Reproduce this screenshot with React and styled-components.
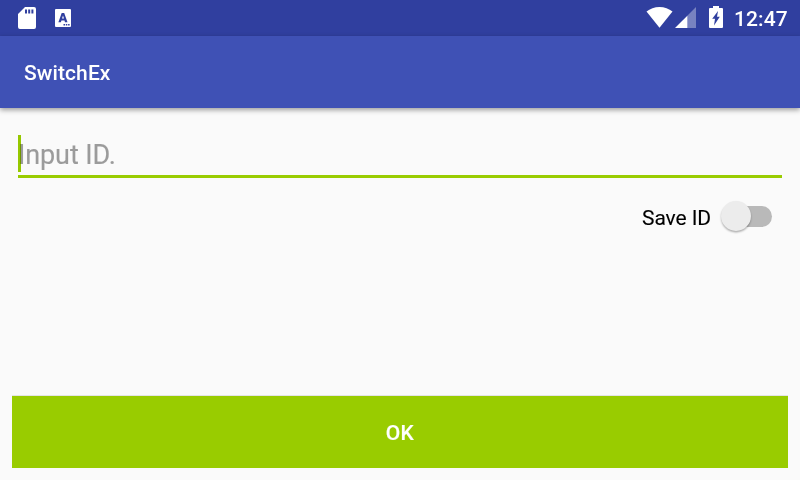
import React from "react";
import styled, { createGlobalStyle } from "styled-components";

const GlobalStyle = createGlobalStyle`
  * { box-sizing: border-box; }
  body { margin: 0; background: #fafafa; font-family: Roboto, sans-serif; }
`;

const Screen = styled.div`
  width: 800px;
  height: 480px;
  display: flex;
  flex-direction: column;
  overflow: hidden;
  background: #fafafa;
`;

const StatusBar = styled.header`
  height: 36px;
  flex: none;
  display: flex;
  align-items: flex-start;
  padding: 0 12px 0 18px;
  background: #303f9f;
  color: #fff;
`;

const StatusIcon = styled.svg`
  display: block;
  flex: none;
  width: ${(p) => p.$w}px;
  height: ${(p) => p.$h}px;
  margin-top: ${(p) => p.$top}px;
  margin-left: ${(p) => p.$gap || 0}px;
`;

const Spacer = styled.div`
  flex: 1;
`;

const Clock = styled.span`
  width: 54px;
  margin-left: 11px;
  font-size: 21px;
  font-weight: 500;
  line-height: 39px;
  letter-spacing: 0.1px;
  white-space: nowrap;
`;

const AppBar = styled.div`
  height: 72px;
  flex: none;
  display: flex;
  align-items: center;
  padding: 1px 24px 0;
  background: #3f51b5;
  box-shadow: 0 2px 5px rgba(0, 0, 0, 0.38);
`;

const Title = styled.h1`
  margin: 0;
  color: #fff;
  font-size: 21px;
  font-weight: 500;
  line-height: 28px;
  letter-spacing: 0.1px;
`;

const Content = styled.main`
  flex: 1;
  display: flex;
  flex-direction: column;
  padding: 27px 12px 12px;
`;

const Field = styled.div`
  height: 43px;
  margin: 0 6px;
  border-bottom: 3px solid #99cc00;
`;

const Hint = styled.div`
  height: 37px;
  color: #9b9b9b;
  font-size: 27px;
  line-height: 40px;
  letter-spacing: -0.1px;
  -webkit-text-stroke: 0.15px #9b9b9b;
  position: relative;
`;

const Caret = styled.span`
  position: absolute;
  left: 0;
  top: 0;
  width: 3px;
  height: 37px;
  background: #99cc00;
  mix-blend-mode: multiply;
`;

const SwitchRow = styled.label`
  display: flex;
  justify-content: flex-end;
  align-items: center;
  height: 31px;
  margin: 23px 16px 0 0;
`;

const SwitchLabel = styled.span`
  margin-right: 11px;
  padding-top: 3px;
  color: #000;
  font-size: 21px;
  line-height: 30px;
  letter-spacing: -0.1px;
  -webkit-text-stroke: 0.1px #000;
`;

const Track = styled.span`
  width: 42px;
  height: 21px;
  margin-left: 8px;
  border-radius: 11px;
  background: #b9b9b9;
  position: relative;
`;

const Thumb = styled.span`
  position: absolute;
  left: -9px;
  top: -5px;
  width: 30px;
  height: 30px;
  border-radius: 50%;
  background: #ececec;
  box-shadow: 0 1.5px 2px rgba(0, 0, 0, 0.3);
`;

const OkButton = styled.button`
  height: 72px;
  margin-top: auto;
  padding: 2px 0 0;
  border: 0;
  background: #99cc00;
  box-shadow: 0 -1px 0 #e4e4e4;
  color: #fff;
  font: 500 21px Roboto, sans-serif;
  letter-spacing: 0.3px;
  -webkit-text-stroke: 0.15px #fff;
`;

export default function App() {
  return (
    <Screen>
      <GlobalStyle />
      <StatusBar>
        <StatusIcon $w={18} $h={22} $top={7} viewBox="0 0 18 22" fill="#fff">
          <path fillRule="evenodd" d="M7 0h9a2 2 0 0 1 2 2v18a2 2 0 0 1-2 2H2a2 2 0 0 1-2-2V7zM7 2.5v4h2v-4zm3.2 0v4h2v-4zm3.2 0v4h2v-4z" />
        </StatusIcon>
        <StatusIcon $w={16} $h={18} $top={9} $gap={19} viewBox="0 0 16 18" fill="#fff">
          <path fillRule="evenodd" d="M1 0h14a1 1 0 0 1 1 1v16a1 1 0 0 1-1 1H1a1 1 0 0 1-1-1V1a1 1 0 0 1 1-1zM6.700 4 3.400 13.200h2.500l.5-1.700h3.100l.5 1.700h2.500L9.200 4zM8 6.400l1 3.200H7zM8.500 15v1.500H10V15zm2.300 0v1.500h1.500V15zm2.300 0v1.500h1.500V15z" />
        </StatusIcon>
        <Spacer />
        <StatusIcon $w={27} $h={21} $top={7} viewBox="0 0 27 21" fill="#fff">
          <path d="M13.5 20.8.5 4.6C4 1.7 8.5 0 13.5 0s9.5 1.7 13 4.6z" />
        </StatusIcon>
        <StatusIcon $w={21} $h={21} $top={7} $gap={2} viewBox="0 0 21 21" fill="#fff">
          <path opacity=".35" d="M21 0v21H12V9z" />
          <path d="M0 21 12.3 8.7V21z" />
        </StatusIcon>
        <StatusIcon $w={14} $h={22} $top={6} $gap={13} viewBox="0 0 14 22" fill="#fff">
          <path fillRule="evenodd" d="M4 0h6v2h3a1 1 0 0 1 1 1v18a1 1 0 0 1-1 1H1a1 1 0 0 1-1-1V3a1 1 0 0 1 1-1h3zM9 5 3.200 12.800H6L5 19.500l5.800-8.800H8z" />
        </StatusIcon>
        <Clock>12:47</Clock>
      </StatusBar>
      <AppBar>
        <Title>SwitchEx</Title>
      </AppBar>
      <Content>
        <Field>
          <Hint>
            Input ID.
            <Caret />
          </Hint>
        </Field>
        <SwitchRow>
          <SwitchLabel>Save ID</SwitchLabel>
          <Track>
            <Thumb />
          </Track>
        </SwitchRow>
        <OkButton>OK</OkButton>
      </Content>
    </Screen>
  );
}
